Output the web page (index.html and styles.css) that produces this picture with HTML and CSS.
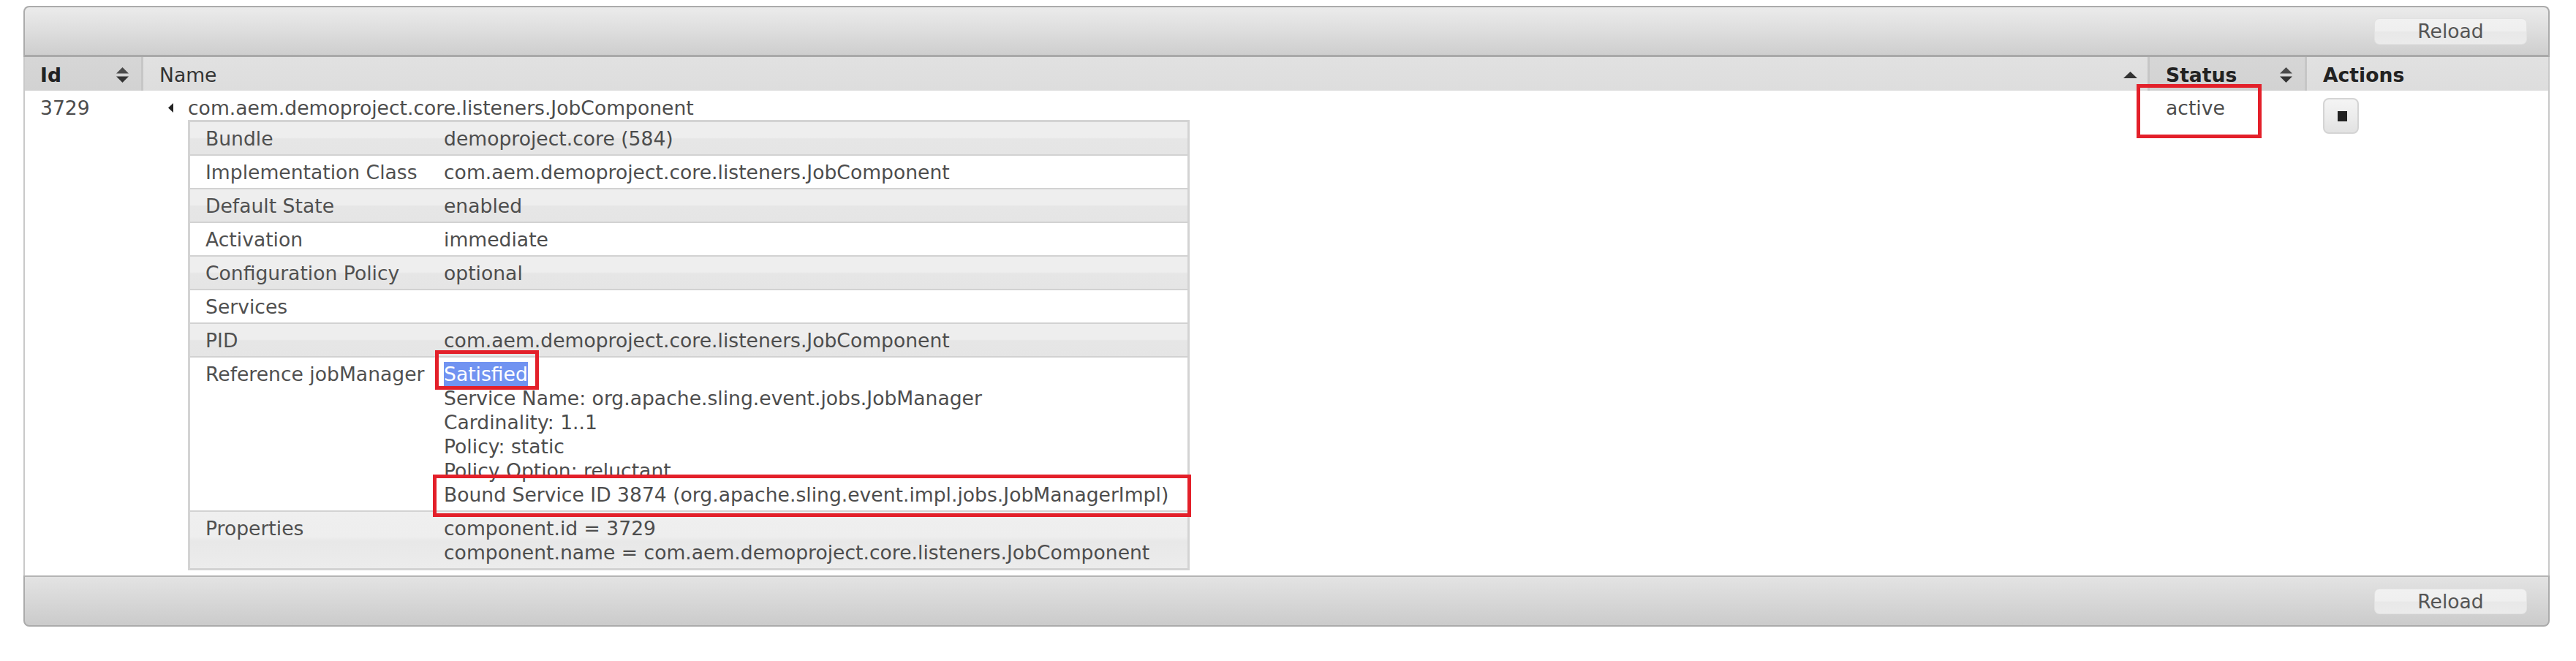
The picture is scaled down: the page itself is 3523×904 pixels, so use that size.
FILE: index.html
```html
<!DOCTYPE html>
<html lang="en">
<head>
<meta charset="utf-8">
<title>Components</title>
<link rel="stylesheet" href="styles.css">
</head>
<body>
<div class="panel">
  <div class="toolbar toolbar-top">
    <button class="btn" type="button">Reload</button>
  </div>

  <div class="list">
    <div class="thead">
      <div class="th th-sortable">
        <span class="bold">Id</span>
        <svg class="ico-sort" width="17" height="21" viewBox="0 0 17 21"><path d="M8.5 0L17 8.5H0Z" fill="#4a4a4a"/><path d="M0 12.5H17L8.5 21Z" fill="#333"/></svg>
      </div>
      <div class="th th-sorted">
        <span>Name</span>
        <svg class="ico-asc" width="19" height="9" viewBox="0 0 19 9"><path d="M9.5 0L19 9H0Z" fill="#333"/></svg>
      </div>
      <div class="th th-sortable">
        <span class="bold">Status</span>
        <svg class="ico-sort" width="17" height="21" viewBox="0 0 17 21"><path d="M8.5 0L17 8.5H0Z" fill="#4a4a4a"/><path d="M0 12.5H17L8.5 21Z" fill="#333"/></svg>
      </div>
      <div class="th th-last">
        <span class="bold">Actions</span>
      </div>
    </div>

    <div class="row">
      <div class="td td-id">3729</div>
      <div class="td td-name">
        <div class="name-line">
          <span class="toggle"><svg width="7" height="13" viewBox="0 0 7 13"><path d="M7 0V13L0 6.5Z" fill="#222"/></svg></span>
          <span>com.aem.demoproject.core.listeners.JobComponent</span>
        </div>
        <div class="props">
          <div class="prow odd"><div class="plabel">Bundle</div><div class="pval">demoproject.core (584)</div></div>
          <div class="prow"><div class="plabel">Implementation Class</div><div class="pval">com.aem.demoproject.core.listeners.JobComponent</div></div>
          <div class="prow odd"><div class="plabel">Default State</div><div class="pval">enabled</div></div>
          <div class="prow"><div class="plabel">Activation</div><div class="pval">immediate</div></div>
          <div class="prow odd"><div class="plabel">Configuration Policy</div><div class="pval">optional</div></div>
          <div class="prow"><div class="plabel">Services</div><div class="pval"></div></div>
          <div class="prow odd"><div class="plabel">PID</div><div class="pval">com.aem.demoproject.core.listeners.JobComponent</div></div>
          <div class="prow"><div class="plabel">Reference jobManager</div>
            <div class="pval">
              <div><span class="sel mark-sat">Satisfied</span></div>
              <div>Service Name: org.apache.sling.event.jobs.JobManager</div>
              <div>Cardinality: 1..1</div>
              <div>Policy: static</div>
              <div>Policy Option: reluctant</div>
              <div class="mark-bound">Bound Service ID 3874 (org.apache.sling.event.impl.jobs.JobManagerImpl)</div>
            </div>
          </div>
          <div class="prow odd prow-last"><div class="plabel">Properties</div>
            <div class="pval">
              <div>component.id = 3729</div>
              <div>component.name = com.aem.demoproject.core.listeners.JobComponent</div>
            </div>
          </div>
        </div>
      </div>
      <div class="td td-status"><span class="flag">active</span></div>
      <div class="td td-actions">
        <button class="act" type="button"><span class="stop"></span></button>
      </div>
    </div>
  </div>

  <div class="toolbar toolbar-bottom">
    <button class="btn" type="button">Reload</button>
  </div>
</div>
</body>
</html>
```

FILE: styles.css
```css
* { box-sizing: border-box; }

html, body {
  margin: 0;
  padding: 0;
  background: #ffffff;
}

body {
  font-family: "DejaVu Sans", Verdana, sans-serif;
  font-size: 26.6px;
  line-height: 33px;
  color: #4d4d4d;
}

.panel {
  margin: 8px 0 0 32px;
  width: 3455px;
}

/* toolbars */
.toolbar {
  display: flex;
  justify-content: flex-end;
  align-items: center;
  padding-right: 29px;
  border: 2px solid #ababab;
}

.toolbar-top {
  height: 70px;
  border-bottom-width: 3px;
  border-bottom-color: #a9a9a9;
  border-radius: 8px 8px 0 0;
  background: linear-gradient(to bottom, #ebebeb 0%, #dcdcdc 55%, #cecece 100%);
}

.toolbar-bottom {
  height: 70px;
  border-top-color: #b4b4b4;
  border-radius: 0 0 8px 8px;
  background: linear-gradient(to bottom, #e3e3e3 0%, #d6d6d6 55%, #cbcbcb 100%);
}

.btn {
  width: 209px;
  height: 36px;
  padding: 0;
  border: 1px solid #e2e2e2;
  border-radius: 7px;
  background: linear-gradient(to bottom, #f1f1f1 0%, #efefef 48%, #e8e8e8 52%, #ebebeb 100%);
  font-family: inherit;
  font-size: 26.6px;
  line-height: 33px;
  color: #555555;
}

.toolbar-bottom .btn { height: 35px; }

/* list */
.list {
  border-left: 2px solid #c9c9c9;
  border-right: 2px solid #c9c9c9;
  background: #ffffff;
}

.thead, .row {
  display: grid;
  grid-template-columns: 162px 1fr 215px 330px;
}

.th {
  height: 46px;
  display: flex;
  align-items: center;
  justify-content: space-between;
  padding: 5px 17px 2px 22px;
  border-right: 3px solid #c6c6c6;
  color: #2a2a2a;
  background: linear-gradient(to bottom, #e1e1e1 0%, #dddddd 100%);
  white-space: nowrap;
}

.th:first-child { padding-left: 21px; }

.th-sortable {
  background: linear-gradient(to bottom, #d6d6d6 0%, #d2d2d2 100%);
}

.th-sorted { padding-right: 14px; color: #333333; }

.th-last { border-right: none; }

.bold { font-weight: bold; color: #222222; }

.ico-sort, .ico-asc { display: block; flex: none; }

.td {
  padding: 7px 0 7px 22px;
  min-width: 0;
}

.td-id { padding-left: 21px; }

.name-line {
  display: flex;
  align-items: center;
  white-space: nowrap;
}

.toggle {
  flex: none;
  width: 39px;
  padding-left: 12px;
  display: flex;
  align-items: center;
}

.toggle svg { display: block; }

/* nested property table */
.props {
  width: 1370px;
  margin-left: 39px;
  border: 3px solid #d3d3d3;
  background: #ffffff;
}

.prow {
  display: grid;
  grid-template-columns: 347px 1fr;
  padding: 6px 0 5px;
  white-space: nowrap;
}

.prow + .prow { border-top: 2px solid #d2d2d2; }

.prow.odd {
  background: linear-gradient(to bottom, #eeeeee 0%, #eeeeee 48%, #e6e6e6 52%, #e5e5e5 100%);
}

.prow.prow-last {
  background: linear-gradient(to bottom, #efefef 0%, #eeeeee 44%, #e8e8e8 52%, #ececec 100%);
}

.plabel {
  padding-left: 21px;
  color: #505050;
}

.pval { color: #4d4d4d; }

/* highlighted text and annotation boxes */
.sel {
  display: inline-block;
  position: relative;
  background: #7193f1;
  color: #ffffff;
}

.mark-sat::after,
.mark-bound::after,
.flag::after {
  content: "";
  position: absolute;
  border: 5px solid #e3202a;
  z-index: 2;
}

.mark-sat::after { left: -12px; right: -15px; top: -16px; bottom: -5px; }

.mark-bound { position: relative; }
.mark-bound::after { left: -15px; right: -5px; top: -11px; bottom: -14px; }

.flag {
  display: inline-block;
  position: relative;
}
.flag::after { left: -40px; right: -50px; top: -16px; bottom: -25px; }

/* action button */
.act {
  margin-top: 3px;
  width: 49px;
  height: 49px;
  padding: 0;
  border: 2px solid #d4d4d4;
  border-radius: 8px;
  background: linear-gradient(to bottom, #f4f4f4 0%, #ececec 50%, #e2e2e2 100%);
  display: flex;
  align-items: center;
  justify-content: center;
}

.stop {
  display: block;
  width: 13px;
  height: 14px;
  margin-left: 3px;
  background: #222222;
}
```
